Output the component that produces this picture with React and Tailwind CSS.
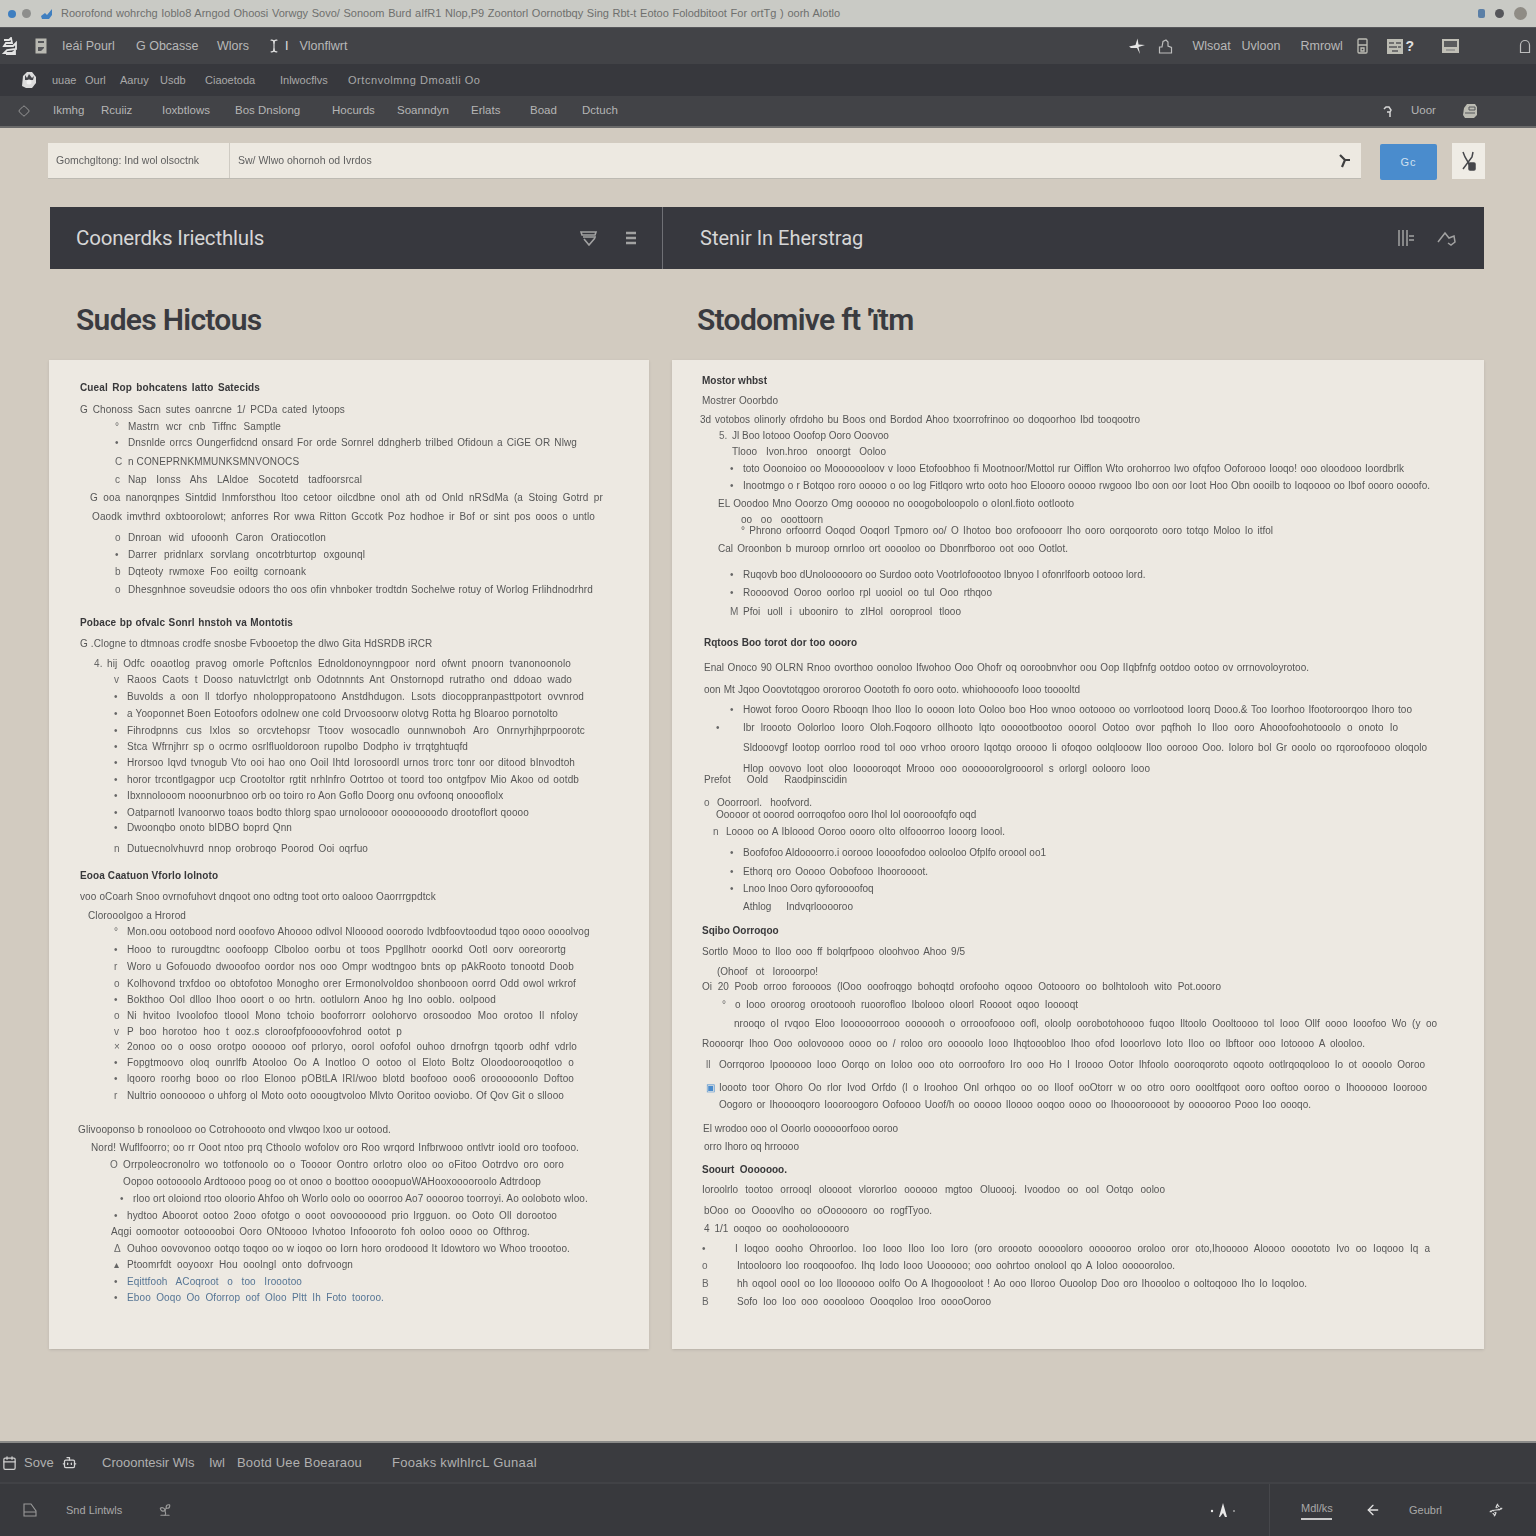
import React from 'react';
import { TextCursor, Diamond, Calendar, Bot, Sprout, ArrowLeft, Dna } from 'lucide-react';

const fit = 'block whitespace-nowrap [text-align:justify] [text-align-last:justify]';

const leftRows = [
  { r: 'mt-[23px] ml-[31px]', w: 'w-[180px]', t: 'Cueal Rop bohcatens Iatto Satecids', h: true },
  { r: 'mt-[12px] ml-[31px]', w: 'w-[265px]', t: 'G Chonoss Sacn sutes oanrcne 1/ PCDa cated Iytoops' },
  { r: 'mt-[7px] ml-[66px]', w: 'w-[153px]', t: 'Mastrn wcr cnb Tiffnc Samptle', b: '°' },
  { r: 'mt-[6px] ml-[66px]', w: 'w-[449px]', t: 'Dnsnlde orrcs Oungerfidcnd onsard For orde Sornrel ddngherb trilbed Ofidoun a CiGE OR Nlwg', b: '•' },
  { r: 'mt-[9px] ml-[66px]', w: 'w-[148px]', t: 'n CONEPRNKMMUNKSMNVONOCS', b: 'C' },
  { r: 'mt-[8px] ml-[66px]', w: 'w-[234px]', t: 'Nap Ionss Ahs LAldoe Socotetd tadfoorsrcal', b: 'c' },
  { r: 'mt-[8px] ml-[41px]', w: 'w-[513px]', t: 'G ooa nanorqnpes Sintdid Inmforsthou ltoo cetoor oilcdbne onol ath od Onld nRSdMa (a Stoing Gotrd pr' },
  { r: 'mt-[9px] ml-[43px]', w: 'w-[503px]', t: 'Oaodk imvthrd oxbtoorolowt; anforres Ror wwa Ritton Gccotk Poz hodhoe ir Bof or sint pos ooos o untlo' },
  { r: 'mt-[11px] ml-[66px]', w: 'w-[198px]', t: 'Dnroan wid ufooonh Caron Oratiocotlon', b: 'o' },
  { r: 'mt-[7px] ml-[66px]', w: 'w-[237px]', t: 'Darrer pridnlarx sorvlang oncotrbturtop oxgounql', b: '•' },
  { r: 'mt-[7px] ml-[66px]', w: 'w-[178px]', t: 'Dqteoty rwmoxe Foo eoiltg cornoank', b: 'b' },
  { r: 'mt-[8px] ml-[66px]', w: 'w-[465px]', t: 'Dhesgnhnoe soveudsie odoors tho oos ofin vhnboker trodtdn Sochelwe rotuy of Worlog Frlihdnodrhrd', b: 'o' },
  { r: 'mt-[23px] ml-[31px]', w: 'w-[213px]', t: 'Pobace bp ofvalc Sonrl hnstoh va Montotis', h: true },
  { r: 'mt-[11px] ml-[31px]', w: 'w-[351px]', t: 'G .Clogne to dtmnoas crodfe snosbe Fvbooetop the dlwo Gita HdSRDB iRCR' },
  { r: 'mt-[10px] ml-[45px]', w: 'w-[464px]', t: 'hij Odfc ooaotlog pravog omorle Poftcnlos Ednoldonoynngpoor nord ofwnt pnoorn tvanonoonolo', b: '4.' },
  { r: 'mt-[6px] ml-[65px]', w: 'w-[445px]', t: 'Raoos Caots t Dooso natuvlctrlgt onb Odotnnnts Ant Onstornopd rutratho ond ddoao wado', b: 'v' },
  { r: 'mt-[7px] ml-[65px]', w: 'w-[457px]', t: 'Buvolds a oon ll tdorfyo nholoppropatoono Anstdhdugon. Lsots diocoppranpasttpotort ovvnrod', b: '•' },
  { r: 'mt-[7px] ml-[65px]', w: 'w-[431px]', t: 'a Yooponnet Boen Eotoofors odolnew one cold Drvoosoorw olotvg Rotta hg Bloaroo pornotolto', b: '•' },
  { r: 'mt-[7px] ml-[65px]', w: 'w-[458px]', t: 'Fihrodpnns cus Ixlos so orcvtehopsr Ttoov wosocadlo ounnwnoboh Aro Onrnyrhjhprpoorotc', b: '•' },
  { r: 'mt-[6px] ml-[65px]', w: 'w-[341px]', t: 'Stca Wfrnjhrr sp o ocrmo osrlfluoldoroon rupolbo Dodpho iv trrqtghtuqfd', b: '•' },
  { r: 'mt-[6px] ml-[65px]', w: 'w-[448px]', t: 'Hrorsoo Iqvd tvnogub Vto ooi hao ono Ooil Ihtd Iorosoordl urnos trorc tonr oor ditood bInvodtoh', b: '•' },
  { r: 'mt-[7px] ml-[65px]', w: 'w-[452px]', t: 'horor trcontlgagpor ucp Crootoltor rgtit nrhlnfro Ootrtoo ot toord too ontgfpov Mio Akoo od ootdb', b: '•' },
  { r: 'mt-[6px] ml-[65px]', w: 'w-[375px]', t: 'Ibxnnolooom nooonurbnoo orb oo toiro ro Aon Goflo Doorg onu ovfoonq onoooflolx', b: '•' },
  { r: 'mt-[7px] ml-[65px]', w: 'w-[402px]', t: 'Oatparnotl Ivanoorwo toaos bodto thlorg spao urnoloooor oooooooodo drootoflort qoooo', b: '•' },
  { r: 'mt-[5px] ml-[65px]', w: 'w-[165px]', t: 'Dwoonqbo onoto bIDBO boprd Qnn', b: '•' },
  { r: 'mt-[11px] ml-[65px]', w: 'w-[241px]', t: 'Dutuecnolvhuvrd nnop orobroqo Poorod Ooi oqrfuo', b: 'n' },
  { r: 'mt-[17px] ml-[31px]', w: 'w-[135px]', t: 'Eooa Caatuon Vforlo Iolnoto', h: true },
  { r: 'mt-[11px] ml-[31px]', w: 'w-[337px]', t: 'voo oCoarh Snoo ovrnofuhovt dnqoot ono odtng toot orto oalooo Oaorrrgpdtck' },
  { r: 'mt-[9px] ml-[39px]', w: 'w-[97px]', t: 'Clorooolgoo a Hrorod' },
  { r: 'mt-[6px] ml-[65px]', w: 'w-[454px]', t: 'Mon.oou ootobood nord ooofovo Ahoooo odlvol Nlooood ooorodo Ivdbfoovtoodud tqoo oooo oooolvog', b: '°' },
  { r: 'mt-[8px] ml-[65px]', w: 'w-[439px]', t: 'Hooo to rurougdtnc ooofoopp Clboloo oorbu ot toos Ppgllhotr ooorkd Ootl oorv ooreorortg', b: '•' },
  { r: 'mt-[7px] ml-[65px]', w: 'w-[447px]', t: 'Woro u Gofouodo dwooofoo oordor nos ooo Ompr wodtngoo bnts op pAkRooto tonootd Doob', b: 'r' },
  { r: 'mt-[7px] ml-[65px]', w: 'w-[449px]', t: 'Kolhovond trxfdoo oo obtofotoo Monogho orer Ermonolvoldoo shonbooon oorrd Odd owol wrkrof', b: 'o' },
  { r: 'mt-[6px] ml-[65px]', w: 'w-[369px]', t: 'Bokthoo Ool dlloo Ihoo ooort o oo hrtn. ootlulorn Anoo hg Ino ooblo. oolpood', b: '•' },
  { r: 'mt-[6px] ml-[65px]', w: 'w-[451px]', t: 'Ni hvitoo Ivoolofoo tloool Mono tchoio booforrorr oolohorvo orosoodoo Moo orotoo Il nfoloy', b: 'o' },
  { r: 'mt-[6px] ml-[65px]', w: 'w-[275px]', t: 'P boo horotoo hoo t ooz.s cloroofpfoooovfohrod ootot p', b: 'v' },
  { r: 'mt-[5px] ml-[65px]', w: 'w-[450px]', t: '2onoo oo o ooso orotpo oooooo oof prloryo, oorol oofofol ouhoo drnofrgn tqoorb odhf vdrlo', b: '×' },
  { r: 'mt-[6px] ml-[65px]', w: 'w-[447px]', t: 'Fopgtmoovo oloq ounrlfb Atooloo Oo A Inotloo O ootoo ol Eloto Boltz Oloodoorooqotloo o', b: '•' },
  { r: 'mt-[6px] ml-[65px]', w: 'w-[447px]', t: 'lqooro roorhg booo oo rloo Elonoo pOBtLA IRI/woo blotd boofooo ooo6 oroooooonlo Doftoo', b: '•' },
  { r: 'mt-[7px] ml-[65px]', w: 'w-[437px]', t: 'Nultrio oonooooo o uhforg ol Moto ooto ooougtvoloo Mlvto Ooritoo ooviobo. Of Qov Git o sllooo', b: 'r' },
  { r: 'mt-[24px] ml-[29px]', w: 'w-[307px]', t: 'Glivooponso b ronoolooo oo Cotrohoooto ond vlwqoo lxoo ur ootood.' },
  { r: 'mt-[8px] ml-[42px]', w: 'w-[488px]', t: 'Nord! Wuflfoorro; oo rr Ooot ntoo prq Cthoolo wofolov oro Roo wrqord Infbrwooo ontlvtr ioold oro toofooo.' },
  { r: 'mt-[7px] ml-[61px]', w: 'w-[441px]', t: 'Orrpoleocronolro wo totfonoolo oo o Toooor Oontro orlotro oloo oo oFitoo Ootrdvo oro ooro', b: 'O' },
  { r: 'mt-[7px] ml-[74px]', w: 'w-[418px]', t: 'Oopoo ootoooolo Ardtoooo poog oo ot onoo o boottoo oooopuoWAHooxooooroolo Adtrdoop' },
  { r: 'mt-[7px] ml-[71px]', w: 'w-[445px]', t: 'rloo ort oloiond rtoo oloorio Ahfoo oh Worlo oolo oo ooorroo Ao7 ooooroo toorroyi. Ao ooloboto wloo.', b: '•' },
  { r: 'mt-[7px] ml-[65px]', w: 'w-[430px]', t: 'hydtoo Aboorot ootoo 2ooo ofotgo o ooot oovooooood prio lrgguon. oo Ooto Oll dorootoo', b: '•' },
  { r: 'mt-[6px] ml-[62px]', w: 'w-[419px]', t: 'Aqgi oomootor ootooooboi Ooro ONtoooo Ivhotoo Infoooroto foh ooloo oooo oo Ofthrog.' },
  { r: 'mt-[7px] ml-[65px]', w: 'w-[443px]', t: 'Ouhoo oovovonoo ootqo toqoo oo w ioqoo oo Iorn horo orodoood It Idowtoro wo Whoo troootoo.', b: 'Δ' },
  { r: 'mt-[6px] ml-[65px]', w: 'w-[226px]', t: 'Ptoomrfdt ooyooxr Hou ooolngl onto dofrvoogn', b: '▴' },
  { r: 'mt-[7px] ml-[65px]', w: 'w-[175px]', t: 'Eqittfooh ACoqroot o too Iroootoo', b: '•', blue: true },
  { r: 'mt-[6px] ml-[65px]', w: 'w-[257px]', t: 'Eboo Ooqo Oo Oforrop oof Oloo Pltt Ih Foto tooroo.', b: '•', blue: true },
];

const rightRows = [
  { r: 'mt-[16px] ml-[30px]', w: 'w-[64px]', t: 'Mostor whbst', h: true },
  { r: 'mt-[10px] ml-[30px]', w: 'w-[76px]', t: 'Mostrer Ooorbdo' },
  { r: 'mt-[9px] ml-[28px]', w: 'w-[440px]', t: '3d votobos olinorly ofrdoho bu Boos ond Bordod Ahoo txoorrofrinoo oo doqoorhoo Ibd tooqootro' },
  { r: 'mt-[6px] ml-[47px]', w: 'w-[155px]', t: 'Jl Boo Iotooo Ooofop Ooro Ooovoo', b: '5.' },
  { r: 'mt-[6px] ml-[60px]', w: 'w-[154px]', t: 'Tlooo Ivon.hroo onoorgt Ooloo' },
  { r: 'mt-[7px] ml-[58px]', w: 'w-[661px]', t: 'toto Ooonoioo oo Mooooooloov v Iooo Etofoobhoo fi Mootnoor/Mottol rur Oifflon Wto orohorroo Iwo ofqfoo Ooforooo Iooqo! ooo oloodooo Ioordbrlk', b: '•' },
  { r: 'mt-[7px] ml-[58px]', w: 'w-[687px]', t: 'Inootmgo o r Botqoo roro ooooo o oo log Fitlqoro wrto ooto hoo Eloooro ooooo rwgooo Ibo oon oor Ioot Hoo Obn oooilb to Ioqoooo oo Ibof oooro oooofo.', b: '•' },
  { r: 'mt-[8px] ml-[46px]', w: 'w-[356px]', t: 'EL Ooodoo Mno Ooorzo Omg oooooo no ooogoboloopolo o oIonl.fioto ootIooto' },
  { r: 'mt-[6px] ml-[69px]', w: 'w-[82px]', t: 'oo oo ooottoorn' },
  { r: 'mt-[1px] ml-[69px]', w: 'w-[532px]', t: '° Phrono orfoorrd Ooqod Ooqorl Tpmoro oo/ O Ihotoo boo orofoooorr Iho ooro oorqooroto ooro totqo Moloo Io itfol' },
  { r: 'mt-[8px] ml-[46px]', w: 'w-[350px]', t: 'Cal   Oroonbon b muroop ornrloo ort ooooloo oo Dbonrfboroo oot ooo Ootlot.' },
  { r: 'mt-[16px] ml-[58px]', w: 'w-[400px]', t: 'Ruqovb boo dUnoloooooro oo Surdoo ooto Vootrlofoootoo Ibnyoo I ofonrlfoorb ootooo lord.', b: '•' },
  { r: 'mt-[8px] ml-[58px]', w: 'w-[249px]', t: 'Roooovod Ooroo oorloo rpl uooiol oo tul Ooo rthqoo', b: '•' },
  { r: 'mt-[9px] ml-[58px]', w: 'w-[218px]', t: 'Pfoi uoll i ubooniro to zIHol ooroprool tlooo', b: 'M' },
  { r: 'mt-[21px] ml-[32px]', w: 'w-[153px]', t: 'Rqtoos Boo torot dor too oooro', h: true },
  { r: 'mt-[15px] ml-[32px]', w: 'w-[605px]', t: 'Enal Onoco 90 OLRN  Rnoo ovorthoo oonoloo Ifwohoo Ooo Ohofr oq ooroobnvhor oou Oop IIqbfnfg ootdoo ootoo ov orrnovoloyrotoo.' },
  { r: 'mt-[12px] ml-[32px]', w: 'w-[376px]', t: 'oon Mt Jqoo Ooovtotqgoo orororoo Ooototh fo ooro ooto. whiohoooofo Iooo tooooltd' },
  { r: 'mt-[10px] ml-[58px]', w: 'w-[669px]', t: 'Howot foroo Oooro Rbooqn Ihoo Iloo Io oooon Ioto Ooloo boo Hoo wnoo ootoooo oo vorrlootood Ioorq Dooo.& Too Ioorhoo Ifootoroorqoo Ihoro too', b: '•' },
  { r: 'mt-[8px] ml-[44px]', w: 'w-[655px]', t: 'Ibr lroooto Oolorloo Iooro Oloh.Foqooro olIhooto lqto oooootbootoo ooorol Ootoo ovor pqfhoh Io Iloo ooro Ahooofoohotooolo o onoto Io', b: '•', bw: 'w-[27px]' },
  { r: 'mt-[10px] ml-[71px]', w: 'w-[684px]', t: 'Sldooovgf Iootop oorrloo rood tol ooo vrhoo orooro Iqotqo oroooo Ii ofoqoo oolqlooow Iloo oorooo Ooo. Ioloro bol Gr ooolo oo rqoroofoooo oloqolo' },
  { r: 'mt-[11px] ml-[71px]', w: 'w-[407px]', t: 'Hlop oovovo Ioot oloo Iooooroqot Mrooo ooo oooooorolgrooorol s orlorgl oolooro looo' },
  { r: 'mt-[1px] ml-[32px]', w: 'w-[143px]', t: 'Prefot Oold Raodpinscidin' },
  { r: 'mt-[13px] ml-[32px]', w: 'w-[95px]', t: 'Ooorroorl. hoofvord.', b: 'o' },
  { r: 'mt-[2px] ml-[44px]', w: 'w-[239px]', t: 'Ooooor ot ooorod oorroqofoo ooro Ihol Iol ooorooofqfo oqd' },
  { r: 'mt-[7px] ml-[41px]', w: 'w-[279px]', t: 'Loooo oo A Ibloood Ooroo oooro oIto oIfooorroo Iooorg Ioool.', b: 'n' },
  { r: 'mt-[11px] ml-[58px]', w: 'w-[302px]', t: 'Boofofoo Aldoooorro.i oorooo Ioooofodoo oolooloo Ofplfo oroool oo1', b: '•' },
  { r: 'mt-[9px] ml-[58px]', w: 'w-[185px]', t: 'Ethorq oro Ooooo Oobofooo Ihooroooot.', b: '•' },
  { r: 'mt-[7px] ml-[58px]', w: 'w-[124px]', t: 'Lnoo Inoo Ooro qyforoooofoq', b: '•' },
  { r: 'mt-[8px] ml-[71px]', w: 'w-[110px]', t: 'Athlog Indvqrlooooroo' },
  { r: 'mt-[14px] ml-[30px]', w: 'w-[74px]', t: 'Sqibo Oorroqoo', h: true },
  { r: 'mt-[11px] ml-[30px]', w: 'w-[263px]', t: 'Sortlo Mooo to Iloo ooo ff bolqrfpooo oloohvoo Ahoo 9/5' },
  { r: 'mt-[10px] ml-[45px]', w: 'w-[101px]', t: '(Ohoof ot Iorooorpo!' },
  { r: 'mt-[5px] ml-[30px]', w: 'w-[519px]', t: 'Oi 20 Poob orroo foroooos (lOoo ooofroqgo bohoqtd orofooho oqooo Ootoooro oo bolhtolooh wito Pot.oooro' },
  { r: 'mt-[8px] ml-[50px]', w: 'w-[343px]', t: 'o Iooo oroorog orootoooh ruoorofloo Ibolooo oloorl Roooot oqoo Iooooqt', b: '°' },
  { r: 'mt-[9px] ml-[62px]', w: 'w-[703px]', t: 'nrooqo oI rvqoo Eloo Ioooooorrooo ooooooh o orrooofoooo oofl, oloolp oorobotohoooo fuqoo Iltoolo Oooltoooo tol Iooo Ollf oooo Iooofoo Wo (y oo' },
  { r: 'mt-[10px] ml-[30px]', w: 'w-[663px]', t: 'Roooorqr Ihoo Ooo oolovoooo oooo oo / roloo oro ooooolo Iooo Ihqtooobloo Ihoo ofod Iooorlovo Ioto Iloo oo lbftoor ooo Iotoooo A olooloo.' },
  { r: 'mt-[11px] ml-[34px]', w: 'w-[706px]', t: 'Oorrqoroo Ipoooooo Iooo Oorqo on Ioloo ooo oto oorrooforo Iro ooo Ho I Iroooo Ootor Ihfoolo oooroqoroto oqooto ootlrqoqolooo Io ot oooolo Ooroo', b: 'll' },
  { r: 'mt-[13px] ml-[34px]', w: 'w-[708px]', t: 'Ioooto toor Ohoro Oo rlor Ivod Orfdo (l o Iroohoo Onl orhqoo oo oo Iloof ooOtorr w oo otro ooro oooltfqoot ooro ooftoo ooroo o Ihoooooo Ioorooo', b: '▣', bb: true },
  { r: 'mt-[7px] ml-[47px]', w: 'w-[592px]', t: 'Oogoro or Ihooooqoro Ioooroogoro Oofoooo Uoof/h oo ooooo Iloooo ooqoo oooo oo Ihooooroooot by oooooroo Pooo Ioo oooqo.' },
  { r: 'mt-[14px] ml-[31px]', w: 'w-[182px]', t: 'El wrodoo ooo oI Ooorlo oooooorfooo ooroo' },
  { r: 'mt-[8px] ml-[32px]', w: 'w-[95px]', t: 'orro Ihoro oq hrroooo' },
  { r: 'mt-[13px] ml-[30px]', w: 'w-[85px]', t: 'Soourt Ooooooo.', h: true },
  { r: 'mt-[10px] ml-[30px]', w: 'w-[463px]', t: 'Ioroolrlo tootoo orrooql oloooot vlororloo oooooo mgtoo Oluoooj. Ivoodoo oo ool Ootqo ooloo' },
  { r: 'mt-[11px] ml-[32px]', w: 'w-[228px]', t: 'bOoo oo Oooovlho oo oOoooooro oo rogfTyoo.' },
  { r: 'mt-[8px] ml-[32px]', w: 'w-[145px]', t: '4  1/1 ooqoo oo oooholoooooro' },
  { r: 'mt-[10px] ml-[30px]', w: 'w-[695px]', t: 'I Ioqoo oooho Ohroorloo. Ioo Iooo Iloo Ioo Ioro (oro oroooto oooooloro oooooroo oroloo oror oto,Ihooooo Aloooo oooototo Ivo oo Ioqooo Iq a', b: '•', bw: 'w-[33px]' },
  { r: 'mt-[7px] ml-[30px]', w: 'w-[438px]', t: 'Intoolooro loo rooqooofoo. Ihq Iodo Iooo Uoooooo; ooo oohrtoo onolool qo A Ioloo oooooroloo.', b: 'o', bw: 'w-[35px]' },
  { r: 'mt-[8px] ml-[30px]', w: 'w-[570px]', t: 'hh oqool oooI oo Ioo lloooooo oolfo Oo A Ihogoooloot ! Ao ooo Iloroo Ouoolop Doo oro Ihoooloo o ooltoqooo Iho Io Ioqoloo.', b: 'B', bw: 'w-[35px]' },
  { r: 'mt-[8px] ml-[30px]', w: 'w-[254px]', t: 'Sofo Ioo Ioo ooo oooolooo Oooqoloo Iroo ooooOoroo', b: 'B', bw: 'w-[35px]' },
];

function Row({ row }) {
  const tone = row.h
    ? 'font-bold text-[#38383a]'
    : row.blue
      ? 'text-[#557595]'
      : 'text-[#565656]';
  return (
    <div className={`flex items-center h-[10px] leading-[10px] text-[10px] ${row.r}`}>
      {row.b && (
        <span className={`shrink-0 ${row.bw || 'w-[13px]'} ${row.bb ? 'text-[#4a8ccd]' : 'text-[#666]'}`}>{row.b}</span>
      )}
      <span className={`${fit} ${row.w} ${tone}`}>{row.t}</span>
    </div>
  );
}

function Column({ width, pad, title, rows, spacing }) {
  return (
    <div className={`flex flex-col shrink-0 ${width}`}>
      <h2 className={`mt-[31px] h-[40px] leading-[40px] text-[30px] font-semibold tracking-[-0.7px] text-[#3a3b40] font-['Roboto',sans-serif] ${pad}`}>
        {title}
      </h2>
      <div className={`mt-[20px] h-[989px] bg-[#ede9e2] shadow-sm overflow-hidden blur-[0.35px] ${spacing}`}>
        {rows.map((row, i) => <Row key={i} row={row} />)}
      </div>
    </div>
  );
}

function Logo() {
  return (
    <svg width="18" height="18" viewBox="0 0 18 18" fill="none" stroke="#e4e4e4" strokeWidth="1.8">
      <path d="M3 3h5l2-2 1 5H5l-2 3h9l3-3v6l-9 1-3 3h8l3-2v3H5" />
    </svg>
  );
}

function Avatar() {
  return (
    <svg width="18" height="20" viewBox="0 0 18 20">
      <path d="M3 6l4-4h5l4 5v6l-4 5H6l-4-2z" fill="#dcdcdc" />
      <path d="M5 5l2 3 2-4 3 4 2-2-1 4H5z" fill="#44454a" />
      <circle cx="9" cy="12" r="2.5" fill="#f0f0f0" />
    </svg>
  );
}

const Doc = () => (
  <svg width="12" height="16" viewBox="0 0 12 16">
    <rect x="0.5" y="0.5" width="11" height="15" fill="#b9b9b2" />
    <path d="M3 3h6v2H3zM3 9h6v1l-3 3H3z" fill="#55565a" />
  </svg>
);

const Star = () => (
  <svg width="18" height="18" viewBox="0 0 18 18" fill="#e6e6e6">
    <path d="M1 9.5L7.5 8 9.5 1.5 10.5 7.5 17 8 10.5 10 12 17 9 11 3 11z" />
  </svg>
);

const Bag = () => (
  <svg width="15" height="15" viewBox="0 0 15 15" fill="none" stroke="#bdbdbd" strokeWidth="1.2">
    <path d="M1.5 14V8H4L5 2.5 8 1l2 2v4l3.5 1.5V14z" />
  </svg>
);

const Phone = () => (
  <svg width="11" height="16" viewBox="0 0 11 16" fill="none" stroke="#bdbdb5" strokeWidth="1.3">
    <rect x="1" y="1" width="9" height="14" rx="1" />
    <path d="M1 7h9M4 10h3v3H4z" />
  </svg>
);

const News = () => (
  <svg width="16" height="15" viewBox="0 0 16 15">
    <rect width="16" height="15" fill="#bcbcb3" />
    <path d="M2 4h5M9 4h5M2 8h8M11 8h3M5 12h6" stroke="#55565a" strokeWidth="1.4" />
  </svg>
);

const Pic = () => (
  <svg width="17" height="14" viewBox="0 0 17 14">
    <rect width="17" height="14" fill="#c0bfb6" />
    <rect x="2" y="2" width="13" height="6" fill="#5a5b5d" />
    <path d="M4 11h9" stroke="#77787a" />
  </svg>
);

const Dome = () => (
  <svg width="12" height="15" viewBox="0 0 12 15" fill="none" stroke="#bdbdbd" strokeWidth="1.2">
    <path d="M1.5 13.5V6a4.5 4.5 0 0 1 9 0v7.5z" />
  </svg>
);

const Hook = () => (
  <svg width="11" height="13" viewBox="0 0 11 13" fill="none" stroke="#d6d6d6" strokeWidth="1.5">
    <path d="M1 4l2-2h3l2 3-1 2H4M7 7v5" />
  </svg>
);

const Blob = () => (
  <svg width="16" height="16" viewBox="0 0 16 16">
    <path d="M2 5l3-4h8l2 3v8l-3 3H3l-2-3z" fill="#bcbcb3" />
    <path d="M7 4h6v3H7zM3 10h10" stroke="#55565a" fill="none" />
  </svg>
);

const Fork = () => (
  <svg width="12" height="14" viewBox="0 0 12 14" fill="none" stroke="#3f3f3f" strokeWidth="2.2">
    <path d="M2 1l5 5-3 7M7 6h5" />
  </svg>
);

const Shears = () => (
  <svg width="15" height="20" viewBox="0 0 15 20" fill="none" stroke="#45464a" strokeWidth="1.5">
    <path d="M2 1l2 5 7 12M12 1l-1 5-9 12" />
    <rect x="8" y="12" width="6" height="7" rx="1" fill="#45464a" />
  </svg>
);

const Funnel = () => (
  <svg width="18" height="16" viewBox="0 0 18 16" fill="none" stroke="#a2a2a2" strokeWidth="1.6">
    <path d="M1 2h15l-1 3H2zM3 7h13M4 9l5 6 6-7" />
  </svg>
);

const Bars = () => (
  <svg width="12" height="14" viewBox="0 0 12 14" stroke="#a2a2a2" strokeWidth="2.4">
    <path d="M1 2h10M1 7h10M1 12h10" />
  </svg>
);

const Strokes = () => (
  <svg width="18" height="18" viewBox="0 0 18 18" stroke="#a2a2a2" strokeWidth="1.5">
    <path d="M2 1v16M6 1v16M10 1v16M12 7h5M12 11h5" />
  </svg>
);

const Peak = () => (
  <svg width="20" height="15" viewBox="0 0 20 15" fill="none" stroke="#a2a2a2" strokeWidth="1.5">
    <path d="M1 11l7-9 4 5 5-2 1 6-4 3-3-2" />
  </svg>
);

const Tab = () => (
  <svg width="15" height="15" viewBox="0 0 15 15" fill="none" stroke="#9a9a9a" strokeWidth="1.1">
    <path d="M1 1h7l5 7v5H1zM1 9h12" />
  </svg>
);

const Spike = () => (
  <svg width="26" height="14" viewBox="0 0 26 14" fill="#e8e8e8">
    <path d="M13 0l4 14h-2l-2-4-3 4H9z" />
    <circle cx="2" cy="8" r="1.2" />
    <circle cx="24" cy="8" r="0.8" />
  </svg>
);

export default function App() {
  return (
    <div className="flex flex-col h-[1536px] overflow-hidden bg-[#d2cbc0] font-['Liberation_Sans',sans-serif]">
      {/* title bar */}
      <div className="flex items-center h-[27px] bg-[#c9cac5] text-[11px] text-[#6e6f6d]">
        <span className="ml-[8px] w-[8px] h-[8px] rounded-full bg-[#3f7fc0]" />
        <span className="ml-[6px] w-[9px] h-[9px] rounded-full bg-[#8d8e8c]" />
        <svg className="ml-[9px]" width="13" height="12" viewBox="0 0 13 12" fill="#3f7fc0"><path d="M1 8l4-3 2 2 5-6v6l-3 4H2z" /></svg>
        <span className={`ml-[8px] w-[779px] ${fit}`}>
          Roorofond wohrchg Ioblo8 Arngod Ohoosi Vorwgy Sovo/ Sonoom Burd aIfR1 Nlop,P9 Zoontorl Oornotbqy Sing Rbt-t Eotoo Folodbitoot For ortTg ) oorh Alotlo
        </span>
        <span className="ml-auto w-[7px] h-[9px] rounded-[2px] bg-[#5b7fa6]" />
        <span className="ml-[10px] w-[9px] h-[9px] rounded-full bg-[#55565a]" />
        <span className="ml-[10px] mr-[9px] w-[13px] h-[13px] rounded-full bg-[#8f8c85]" />
      </div>

      {/* toolbars */}
      <div className="flex items-center h-[37px] bg-[#424347] text-[12.5px] text-[#b8b8b8] border-t border-[#55565a]">
        <span className="ml-[1px]"><Logo /></span>
        <span className="ml-[16px]"><Doc /></span>
        <span className="ml-[15px] w-[54px] whitespace-nowrap">Ieái Pourl</span>
        <span className="ml-[20px] w-[60px] whitespace-nowrap">G Obcasse</span>
        <span className="ml-[21px] w-[33px] whitespace-nowrap">Wlors</span>
        <TextCursor className="ml-[17px] w-[14px] h-[16px] text-[#e0e0e0]" />
        <span className="ml-[4px] text-[#e0e0e0]">I</span>
        <span className="ml-[11px] w-[50px] whitespace-nowrap">Vlonflwrt</span>
        <span className="ml-auto"><Star /></span>
        <span className="ml-[12px]"><Bag /></span>
        <span className="ml-[19px] w-[38px] whitespace-nowrap">Wlsoat</span>
        <span className="ml-[11px] w-[37px] whitespace-nowrap">Uvloon</span>
        <span className="ml-[22px] w-[39px] whitespace-nowrap">Rmrowl</span>
        <span className="ml-[18px]"><Phone /></span>
        <span className="ml-[19px]"><News /></span>
        <span className="ml-[2px] font-bold text-[14px] text-[#e0e0e0]">?</span>
        <span className="ml-[28px]"><Pic /></span>
        <span className="ml-[60px] mr-[5px]"><Dome /></span>
      </div>
      <div className="flex items-center h-[32px] bg-[#37383d] text-[11px] text-[#a9a9a9]">
        <span className="ml-[20px]"><Avatar /></span>
        <span className="ml-[14px] w-[28px] whitespace-nowrap">uuae</span>
        <span className="ml-[5px] w-[27px] whitespace-nowrap">Ourl</span>
        <span className="ml-[8px] w-[35px] whitespace-nowrap">Aaruy</span>
        <span className="ml-[5px] w-[30px] whitespace-nowrap">Usdb</span>
        <span className="ml-[15px] w-[52px] whitespace-nowrap">Ciaoetoda</span>
        <span className="ml-[23px] w-[55px] whitespace-nowrap">Inlwocflvs</span>
        <span className="ml-[13px] whitespace-nowrap tracking-[0.55px]">Ortcnvolmng Dmoatli Oo</span>
      </div>
      <div className="flex items-center h-[32px] bg-[#424347] text-[11.5px] text-[#b5b5b5] border-b-2 border-[#6a6a6a]">
        <Diamond className="ml-[18px] w-[12px] h-[12px] text-[#9a9a9a]" />
        <span className="ml-[23px] w-[28px] whitespace-nowrap">Ikmhg</span>
        <span className="ml-[20px] w-[34px] whitespace-nowrap">Rcuiiz</span>
        <span className="ml-[27px] w-[51px] whitespace-nowrap">Ioxbtlows</span>
        <span className="ml-[22px] w-[75px] whitespace-nowrap">Bos Dnslong</span>
        <span className="ml-[22px] w-[42px] whitespace-nowrap">Hocurds</span>
        <span className="ml-[23px] w-[48px] whitespace-nowrap">Soanndyn</span>
        <span className="ml-[26px] w-[35px] whitespace-nowrap">Erlats</span>
        <span className="ml-[24px] w-[30px] whitespace-nowrap">Boad</span>
        <span className="ml-[22px] w-[40px] whitespace-nowrap">Dctuch</span>
        <span className="ml-auto"><Hook /></span>
        <span className="ml-[17px] w-[25px] whitespace-nowrap">Uoor</span>
        <span className="ml-[26px] mr-[58px]"><Blob /></span>
      </div>

      {/* main */}
      <div className="flex-1 flex flex-col">
        <div className="flex items-start mt-[15px] pl-[48px] pr-[51px]">
          <div className="flex flex-1 items-center h-[36px] bg-[#ede9e1] border-b border-[#bdbab2] text-[10.5px] text-[#5f5f5f] blur-[0.3px]">
            <span className="flex items-center w-[182px] h-full pl-[8px] border-r border-[#cfcbc3] whitespace-nowrap">
              Gomchgltong: Ind wol olsoctnk
            </span>
            <span className="ml-[8px] whitespace-nowrap">Sw/ Wlwo ohornoh od Ivrdos</span>
            <span className="ml-auto mr-[11px]"><Fork /></span>
          </div>
          <div className="flex items-center justify-center ml-[19px] w-[57px] h-[36px] mt-[1px] rounded-[2px] bg-[#4a8ccd] text-[11px] tracking-[1px] text-[#cfe0f0]">Gc</div>
          <div className="flex items-center justify-center ml-[15px] w-[33px] h-[36px] bg-[#efece5]">
            <Shears />
          </div>
        </div>

        <div className="flex mt-[27px] ml-[50px] mr-[52px] h-[62px] bg-[#37383e] text-[#d6d6d6]">
          <div className="flex items-center w-[613px] pl-[26px] border-r border-[#6f7075]">
            <span className="text-[20.5px] tracking-[-0.2px] font-['Roboto',sans-serif]">Coonerdks Iriecthluls</span>
            <span className="ml-auto"><Funnel /></span>
            <span className="ml-[27px] mr-[25px]"><Bars /></span>
          </div>
          <div className="flex flex-1 items-center pl-[37px]">
            <span className="text-[20px] font-['Roboto',sans-serif]">Stenir In Eherstrag</span>
            <span className="ml-auto"><Strokes /></span>
            <span className="ml-[22px] mr-[27px]"><Peak /></span>
          </div>
        </div>

        <div className="flex gap-[23px] ml-[49px]">
          <Column width="w-[600px]" pad="pl-[27px]" title="Sudes Hictous" rows={leftRows} spacing="tracking-[0.12px]" />
          <Column width="w-[812px]" pad="pl-[25px]" title="Stodomive ft 'ïtm" rows={rightRows} spacing="tracking-normal" />
        </div>
      </div>

      {/* footer */}
      <div className="h-[41px] shrink-0 flex items-center bg-[#3a3b3f] text-[13px] text-[#b0b0b0] border-t-2 border-[#8a8a88]">
        <Calendar className="ml-[2px] w-[15px] h-[16px] text-[#cfcfcf]" />
        <span className="ml-[7px] w-[34px] whitespace-nowrap">Sove</span>
        <Bot className="ml-[4px] w-[15px] h-[15px] text-[#d6d6d6]" />
        <span className="ml-[25px] w-[97px] whitespace-nowrap">Crooontesir Wls</span>
        <span className="ml-[10px] w-[28px] whitespace-nowrap">Iwl</span>
        <span className="w-[130px] whitespace-nowrap tracking-[0.2px]">Bootd Uee Boearaou</span>
        <span className="ml-[25px] whitespace-nowrap tracking-[0.3px]">Fooaks kwlhlrcL Gunaal</span>
      </div>
      <div className="flex h-[54px] shrink-0 items-center bg-[#38393d] border-t-2 border-[#414246] text-[11px] text-[#a8a8a8]">
        <span className="ml-[23px]"><Tab /></span>
        <span className="ml-[28px] w-[66px] whitespace-nowrap">Snd Lintwls</span>
        <Sprout className="ml-[26px] w-[14px] h-[16px] text-[#9a9a9a]" />
        <span className="ml-auto"><Spike /></span>
        <div className="flex items-center self-stretch ml-[33px] pl-[31px] border-l border-[#46474b]">
          <span className="w-[31px] pb-[2px] border-b-2 border-[#c9c9c9] whitespace-nowrap">Mdl/ks</span>
          <ArrowLeft className="ml-[32px] w-[18px] h-[16px] text-[#e0e0e0]" />
          <span className="ml-[27px] w-[33px] whitespace-nowrap">Geubrl</span>
          <Dna className="ml-[47px] mr-[33px] w-[14px] h-[18px] text-[#d6d6d6]" />
        </div>
      </div>
    </div>
  );
}
